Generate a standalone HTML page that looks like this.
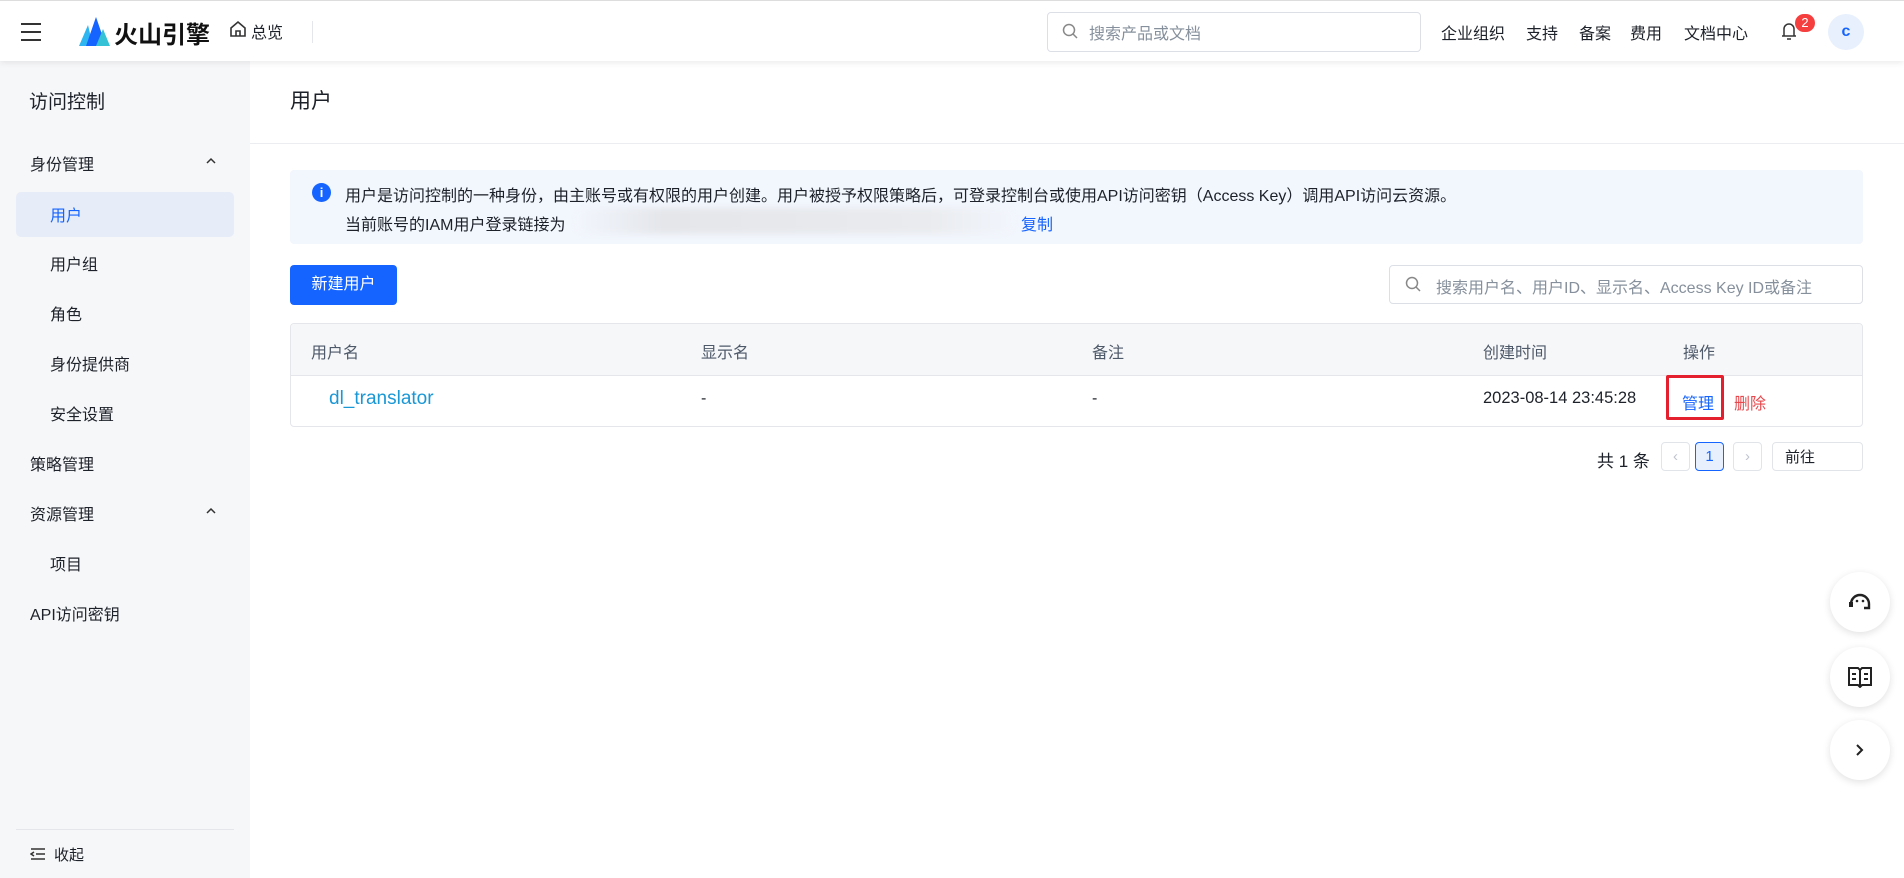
<!DOCTYPE html>
<html><head><meta charset="utf-8"><style>
*{box-sizing:border-box;margin:0;padding:0}
body{width:1904px;height:878px;overflow:hidden;background:#fff;font-family:"Liberation Sans","Noto Sans CJK SC",sans-serif;color:#1d2129;position:relative;font-size:16px}
.a{position:absolute;white-space:nowrap}
.hdr{position:absolute;left:0;top:0;width:1904px;height:61px;background:#fff;box-shadow:0 2px 6px rgba(0,0,0,.08);z-index:2;border-top:1px solid #ddd}
.side{position:absolute;left:0;top:61px;width:250px;height:817px;background:#f6f7f9}
.si{position:absolute;left:30px;font-size:16px;color:#1d2129}
.si2{left:50px}
.circ{position:absolute;left:1830px;width:60px;height:60px;border-radius:50%;background:#fff;box-shadow:0 2px 8px rgba(0,0,0,.12);display:flex;align-items:center;justify-content:center}
.pg{position:absolute;top:442px;height:29px;border:1px solid #e1e4e8;border-radius:4px;display:flex;align-items:center;justify-content:center;color:#c0c4cc;font-size:15px}
</style></head><body>
<div class="hdr">
 <svg class="a" style="left:20px;top:21px" width="22" height="20"><path d="M1 2h20M1 10h20M1 18h20" stroke="#333" stroke-width="2"/></svg>
 <svg class="a" style="left:79px;top:16px" width="32" height="30"><path d="M0 29L9 8 14 29z" fill="#2fb6f0"/><path d="M7 29L17 0 27 29z" fill="#1664ff"/><path d="M17 29L24 12 31 29z" fill="#35c2d6"/></svg>
 <div class="a" style="left:114px;top:14px;font-size:24px;font-weight:bold;color:#111">火山引擎</div>
 <svg class="a" style="left:229px;top:19px" width="18" height="18"><path d="M2 8L9 2l7 6v8H2z" fill="none" stroke="#333" stroke-width="1.6"/><path d="M7 16v-5h4v5" fill="none" stroke="#333" stroke-width="1.6"/></svg>
 <div class="a" style="left:251px;top:18px;font-size:16px">总览</div>
 <div class="a" style="left:312px;top:20px;width:1px;height:22px;background:#e5e6eb"></div>
 <div class="a" style="left:1047px;top:11px;width:374px;height:40px;border:1px solid #dcdfe6;border-radius:4px"></div>
 <svg class="a" style="left:1062px;top:22px" width="16" height="16"><circle cx="7" cy="7" r="5.5" fill="none" stroke="#888" stroke-width="1.5"/><path d="M11 11l4 4" stroke="#888" stroke-width="1.5"/></svg>
 <div class="a" style="left:1089px;top:19px;color:#86909c">搜索产品或文档</div>
 <div class="a" style="left:1441px;top:19px">企业组织</div>
 <div class="a" style="left:1526px;top:19px">支持</div>
 <div class="a" style="left:1579px;top:19px">备案</div>
 <div class="a" style="left:1630px;top:19px">费用</div>
 <div class="a" style="left:1684px;top:19px">文档中心</div>
 <svg class="a" style="left:1780px;top:20px" width="18" height="20"><path d="M4 15V8a5 5 0 0110 0v7zM2 15h14M7 18h4" fill="none" stroke="#333" stroke-width="1.5"/></svg>
 <div class="a" style="left:1795px;top:13px;width:20px;height:18px;border-radius:9px;background:#f53f3f;color:#fff;font-size:13px;text-align:center;line-height:18px">2</div>
 <div class="a" style="left:1828px;top:13px;width:36px;height:36px;border-radius:50%;background:#e8f0fd;color:#1664ff;font-weight:bold;text-align:center;line-height:36px;font-size:16px">c</div>
</div>
<div class="side">
 <div class="a" style="left:29px;top:26px;font-size:19px">访问控制</div>
 <div class="si a" style="top:90px">身份管理</div>
 <svg class="a" style="left:206px;top:96px" width="10" height="8"><path d="M1 6l4-4 4 4" fill="none" stroke="#333" stroke-width="1.5"/></svg>
 <div class="a" style="left:16px;top:131px;width:218px;height:45px;background:#e6ecf8;border-radius:5px"></div>
 <div class="si si2 a" style="top:141px;color:#1664ff">用户</div>
 <div class="si si2 a" style="top:190px">用户组</div>
 <div class="si si2 a" style="top:240px">角色</div>
 <div class="si si2 a" style="top:290px">身份提供商</div>
 <div class="si si2 a" style="top:340px">安全设置</div>
 <div class="si a" style="top:390px">策略管理</div>
 <div class="si a" style="top:440px">资源管理</div>
 <svg class="a" style="left:206px;top:446px" width="10" height="8"><path d="M1 6l4-4 4 4" fill="none" stroke="#333" stroke-width="1.5"/></svg>
 <div class="si si2 a" style="top:490px">项目</div>
 <div class="si a" style="top:540px">API访问密钥</div>
 <div class="a" style="left:16px;top:768px;width:218px;height:1px;background:#e5e6eb"></div>
 <svg class="a" style="left:30px;top:786px" width="16" height="14"><path d="M1 2h14M6 7h9M1 12h14M4 5L1 7l3 2" fill="none" stroke="#333" stroke-width="1.5"/></svg>
 <div class="a" style="left:54px;top:783px;font-size:15px">收起</div>
</div>
<div class="a" style="left:290px;top:85px;font-size:21px">用户</div>
<div class="a" style="left:250px;top:143px;width:1654px;height:1px;background:#ebedf0"></div>
<div class="a" style="left:290px;top:170px;width:1573px;height:74px;background:#f2f6fd;border-radius:4px"></div>
<div class="a" style="left:312px;top:183px;width:19px;height:19px;border-radius:50%;background:#1664ff;color:#fff;font-size:13px;font-weight:bold;text-align:center;line-height:19px">i</div>
<div class="a" style="left:345px;top:182px;font-size:16px">用户是访问控制的一种身份，由主账号或有权限的用户创建。用户被授予权限策略后，可登录控制台或使用API访问密钥（Access Key）调用API访问云资源。</div>
<div class="a" style="left:345px;top:211px;font-size:16px">当前账号的IAM用户登录链接为</div>
<div class="a" style="left:575px;top:208px;width:440px;height:26px;background:linear-gradient(90deg,#f2f6fd,#e4e6ea 20%,#e9ebee 80%,#f2f6fd);border-radius:12px;filter:blur(3px)"></div>
<div class="a" style="left:1021px;top:211px;font-size:16px;color:#1664ff">复制</div>
<div class="a" style="left:290px;top:265px;width:107px;height:40px;background:#1664ff;border-radius:4px;color:#fff;font-size:16px;text-align:center;line-height:40px">新建用户</div>
<div class="a" style="left:1389px;top:265px;width:474px;height:39px;border:1px solid #dcdfe6;border-radius:4px"></div>
<svg class="a" style="left:1405px;top:276px" width="16" height="16"><circle cx="7" cy="7" r="5.5" fill="none" stroke="#888" stroke-width="1.5"/><path d="M11 11l4 4" stroke="#888" stroke-width="1.5"/></svg>
<div class="a" style="left:1436px;top:274px;color:#86909c;font-size:16px">搜索用户名、用户ID、显示名、Access Key ID或备注</div>
<div class="a" style="left:290px;top:323px;width:1573px;height:104px;border:1px solid #e5e6eb;border-radius:4px;overflow:hidden">
 <div style="height:52px;background:#f6f7f9;border-bottom:1px solid #e5e6eb"></div>
</div>
<div class="a" style="left:311px;top:339px;font-size:16px;color:#4e5969">用户名</div>
<div class="a" style="left:701px;top:339px;font-size:16px;color:#4e5969">显示名</div>
<div class="a" style="left:1092px;top:339px;font-size:16px;color:#4e5969">备注</div>
<div class="a" style="left:1483px;top:339px;font-size:16px;color:#4e5969">创建时间</div>
<div class="a" style="left:1683px;top:339px;font-size:16px;color:#4e5969">操作</div>
<div class="a" style="left:329px;top:388px;font-size:19px;color:#1a97d5">dl_translator</div>
<div class="a" style="left:701px;top:390px">-</div>
<div class="a" style="left:1092px;top:390px">-</div>
<div class="a" style="left:1483px;top:389px;font-size:16.5px">2023-08-14 23:45:28</div>
<div class="a" style="left:1666px;top:375px;width:58px;height:45px;border:3px solid #e5202e;border-radius:2px"></div>
<div class="a" style="left:1682px;top:390px;font-size:16px;color:#1664ff">管理</div>
<div class="a" style="left:1734px;top:390px;font-size:16px;color:#e5484d">删除</div>
<div class="a" style="left:1597px;top:447px;font-size:17px">共 1 条</div>
<div class="pg" style="left:1661px;width:29px">‹</div>
<div class="pg" style="left:1695px;width:29px;border-color:#1664ff;background:#e8f0fd;color:#1664ff">1</div>
<div class="pg" style="left:1733px;width:29px">›</div>
<div class="pg" style="left:1772px;width:91px;justify-content:flex-start;padding-left:12px;color:#1d2129">前往</div>
<div class="circ" style="top:572px"><svg width="26" height="24"><path d="M4 14a9 9 0 1118 0" fill="none" stroke="#222" stroke-width="2.4"/><circle cx="10" cy="11" r="1.3" fill="#222"/><circle cx="16" cy="11" r="1.3" fill="#222"/><path d="M22 14v4h-5" fill="none" stroke="#222" stroke-width="2.4"/><rect x="2" y="12" width="4" height="5" fill="#222"/></svg></div>
<div class="circ" style="top:647px"><svg width="26" height="22"><path d="M2 2h9l2 2 2-2h9v17h-9l-2 2-2-2H2z M13 4v16" fill="none" stroke="#222" stroke-width="2"/><path d="M5 8h4M5 13h4M17 8h4M17 13h4" stroke="#222" stroke-width="2"/></svg></div>
<div class="circ" style="top:720px"><svg width="12" height="14"><path d="M3 2l5 5-5 5" fill="none" stroke="#222" stroke-width="2"/></svg></div>
</body></html>
